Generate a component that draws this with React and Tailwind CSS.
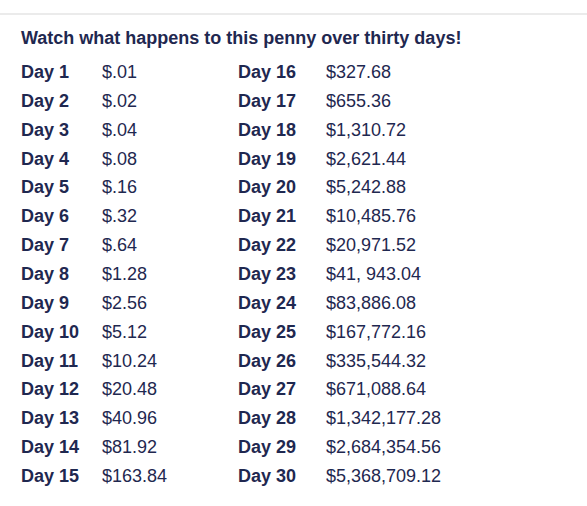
const days = [
  ".01", ".02", ".04", ".08", ".16", ".32", ".64", "1.28", "2.56", "5.12",
  "10.24", "20.48", "40.96", "81.92", "163.84", "327.68", "655.36", "1,310.72",
  "2,621.44", "5,242.88", "10,485.76", "20,971.52", "41, 943.04", "83,886.08",
  "167,772.16", "335,544.32", "671,088.64", "1,342,177.28", "2,684,354.56",
  "5,368,709.12",
];

const rows = days.slice(0, 15).map((v, i) => [i + 1, v, i + 16, days[i + 15]]);

export default function App() {
  return (
    <div
      className="min-h-[506px] bg-white text-[#1f2850] pt-[13px]"
      style={{ fontFamily: '"Liberation Sans", Arial, sans-serif' }}
    >
      <div className="border-t-2 border-[#ebebeb] pl-[21px] pt-[11px]">
        <h2 className="text-[18px] font-bold leading-[24px]">
          Watch what happens to this penny over thirty days!
        </h2>
        <div className="mt-[8px] grid grid-cols-[81px_136px_88px_1fr] text-[18px] leading-[28.86px]">
          {rows.map(([a, va, b, vb]) => (
            <div key={a} className="contents">
              <span className="font-bold">Day {a}</span>
              <span>${va}</span>
              <span className="font-bold">Day {b}</span>
              <span>${vb}</span>
            </div>
          ))}
        </div>
      </div>
    </div>
  );
}
